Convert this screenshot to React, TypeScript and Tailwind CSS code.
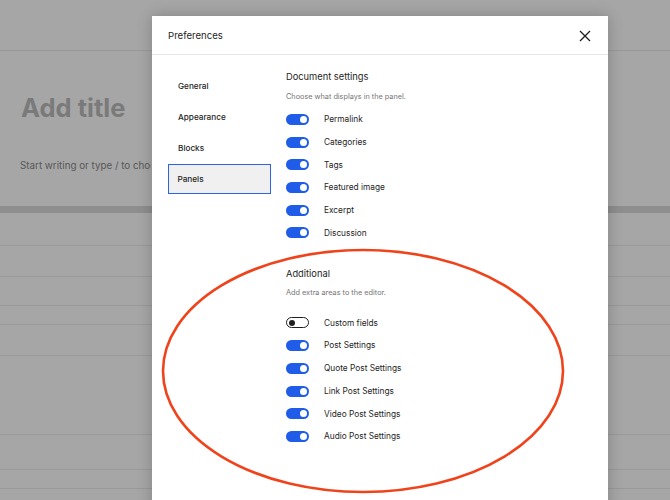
const documentPanels = ['Permalink', 'Categories', 'Tags', 'Featured image', 'Excerpt', 'Discussion']

const additionalPanels = [
  { label: 'Custom fields', on: false },
  { label: 'Post Settings', on: true },
  { label: 'Quote Post Settings', on: true },
  { label: 'Link Post Settings', on: true },
  { label: 'Video Post Settings', on: true },
  { label: 'Audio Post Settings', on: true },
]

const navItems = ['General', 'Appearance', 'Blocks', 'Panels']

// heights of the editor rows behind the dialog (each ends in a 1px line)
const bgRows = [33, 31, 29, 19, 31, 79, 35, 19, 40]

function Toggle({ on }: { on: boolean }) {
  if (on) {
    return (
      <span className="flex h-[11px] w-[23px] shrink-0 items-center justify-end rounded-full bg-[#1f5ce8] pr-[2px]">
        <span className="h-[7px] w-[7px] rounded-full bg-white" />
      </span>
    )
  }
  return (
    <span className="flex h-[11px] w-[23px] shrink-0 items-center rounded-full border border-[#1e1e1e] bg-white pl-[2px]">
      <span className="h-[6px] w-[6px] rounded-full bg-[#1e1e1e]" />
    </span>
  )
}

function ToggleRow({ label, on }: { label: string; on: boolean }) {
  return (
    <div className="flex h-[22.7px] items-center gap-[15px]">
      <Toggle on={on} />
      <span className="text-[8.3px] text-[#1e1e1e]">{label}</span>
    </div>
  )
}

export default function App() {
  return (
    <div className="relative h-[500px] w-[670px] overflow-hidden bg-[#a6a6a6] font-['Inter',_sans-serif]">
      {/* dimmed editor behind the dialog */}
      <div className="h-[51px] border-b border-[#989898]" />
      <div className="h-[155px] pl-[20px]">
        <div className="pl-[1px] pt-[42px] text-[25.5px] font-bold leading-[30px] text-[#7a7a7a]">Add title</div>
        <div className="w-[131px] overflow-hidden whitespace-nowrap pt-[36px] text-[9.8px] leading-[14px] text-[#575757]">
          Start writing or type / to choo
        </div>
      </div>
      <div className="h-[7px] bg-[#8e8e8e]" />
      {bgRows.map((h, i) => (
        <div key={i} className="border-b border-[#999999]" style={{ height: h }} />
      ))}

      {/* Preferences dialog */}
      <div className="absolute left-[152px] top-[16px] h-[500px] w-[456px] bg-white shadow-[0_0_14px_rgba(0,0,0,0.22)]">
        <div className="flex h-[39px] items-center justify-between border-b border-[#e4e4e4] pl-[16px] pr-[17px] pt-[2px]">
          <span className="text-[9.6px] text-[#1e1e1e]">Preferences</span>
          <svg width="12" height="12" viewBox="0 0 12 12" className="text-[#1e1e1e]">
            <path d="M1 1L11 11M11 1L1 11" stroke="currentColor" strokeWidth="1.3" />
          </svg>
        </div>

        <div className="flex">
          <div className="flex w-[134px] flex-col gap-[1px] pl-[16px] pr-[15px] pt-[16px]">
            {navItems.map((item) =>
              item === 'Panels' ? (
                <div
                  key={item}
                  className="flex h-[30px] items-center border-[1.5px] border-[#2d63e8] bg-[#f0f0f0] pl-[8.5px] text-[8.2px] font-medium text-[#1e1e1e]"
                >
                  {item}
                </div>
              ) : (
                <div key={item} className="flex h-[30px] items-center pl-[10px] text-[8.2px] font-medium text-[#1e1e1e]">
                  {item}
                </div>
              )
            )}
          </div>

          <div className="flex flex-col pt-[16px]">
            <div className="text-[9.3px] leading-[12px] text-[#1e1e1e]">Document settings</div>
            <div className="mt-[9px] text-[7.3px] leading-[10px] text-[#757575]">Choose what displays in the panel.</div>
            <div className="mt-[6px] flex flex-col">
              {documentPanels.map((p) => (
                <ToggleRow key={p} label={p} on />
              ))}
            </div>

            <div className="mt-[24px] text-[9.3px] leading-[12px] text-[#1e1e1e]">Additional</div>
            <div className="mt-[8px] text-[7.3px] leading-[10px] text-[#757575]">Add extra areas to the editor.</div>
            <div className="mt-[13.5px] flex flex-col">
              {additionalPanels.map((p) => (
                <ToggleRow key={p.label} label={p.label} on={p.on} />
              ))}
            </div>
          </div>
        </div>
      </div>

      {/* hand-drawn annotation */}
      <svg className="pointer-events-none absolute left-0 top-0" width="670" height="500">
        <ellipse cx="363" cy="371" rx="200" ry="121" fill="none" stroke="#f0431c" strokeWidth="2.6" />
      </svg>
    </div>
  )
}
